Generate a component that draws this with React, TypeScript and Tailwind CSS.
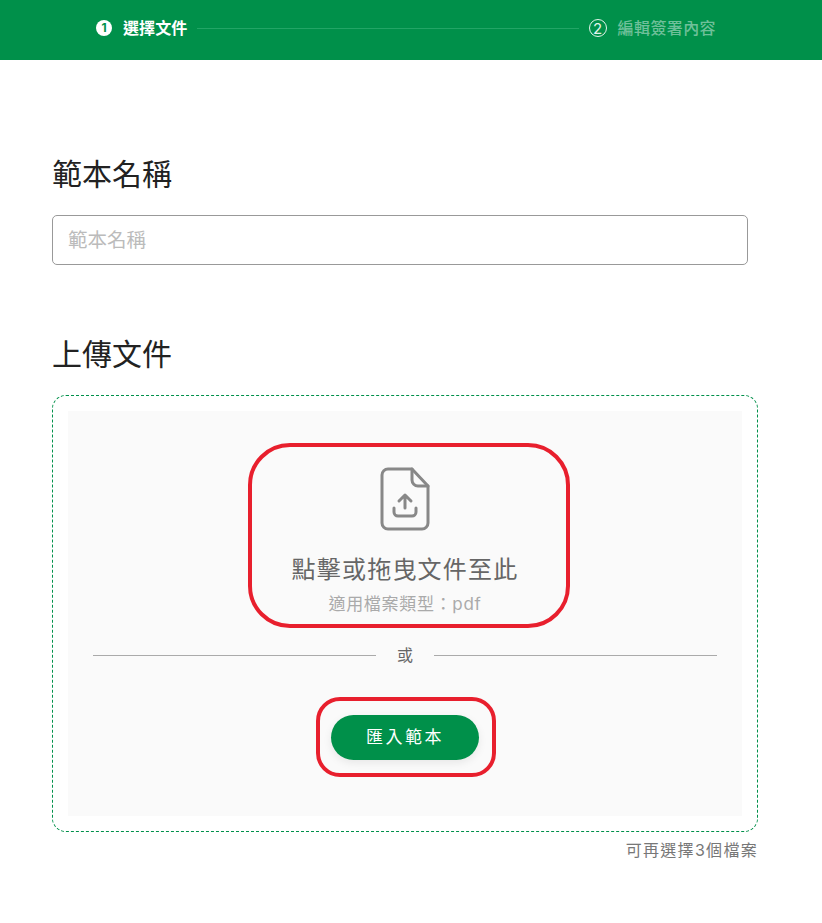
import React from "react";

const App = () => {
  return (
    <div className="flex flex-col w-full bg-white font-['Inter','Noto_Sans_CJK_TC',sans-serif]">
      <div className="bg-[#00904a] h-[60px] w-full flex items-center pl-[96px] pr-[106px] pb-[4px]">
        <div className="w-4 h-4 rounded-full bg-white text-[#00904a] text-[12px] font-bold flex items-center justify-center leading-none">
          1
        </div>
        <p className="ml-[11px] text-white font-bold text-base tracking-[0.1px]">選擇文件</p>
        <div className="flex-1 h-px bg-[#22a566] mx-[10px]"></div>
        <div className="w-[18px] h-[18px] rounded-full border border-[#e3f4eb] text-[#e3f4eb] text-[15px] flex items-center justify-center leading-none">
          2
        </div>
        <p className="ml-[11px] text-[#6fc09a] font-medium text-base tracking-[0.4px]">編輯簽署內容</p>
      </div>

      <div className="pl-[52px] pr-[64px] pt-[92px] flex flex-col">
        <p className="text-[30px] leading-[44px] text-[#222222]">範本名稱</p>
        <input
          placeholder="範本名稱"
          className="mt-[19px] w-[696px] h-[50px] border border-[#999999] rounded-[5px] px-[15px] text-[19.5px] placeholder:text-[#bbbbbb] outline-none"
        />

        <p className="mt-[67px] text-[30px] leading-[44px] text-[#222222]">上傳文件</p>

        <div className="mt-[19px] w-[706px] h-[437px] border border-dashed border-[#00904a] rounded-[14px] p-[15px]">
          <div className="bg-[#fafafa] h-full flex flex-col items-center pt-[32px]">
            <div className="ml-[7px] pr-[7px] w-[322px] h-[185px] border-[4px] border-[#e81f2d] rounded-[42px] flex flex-col items-center pt-[20px]">
              <svg width="50" height="64" viewBox="0 0 50 64" fill="none" stroke="#888888" strokeWidth="3" strokeLinecap="round" strokeLinejoin="round">
                <path d="M8 2h24l16 17v37a6 6 0 0 1-6 6H8a6 6 0 0 1-6-6V8a6 6 0 0 1 6-6z" />
                <path d="M32 2v11a6 6 0 0 0 6 6h10" />
                <path d="M25 41V28M19 34l6-6 6 6" />
                <path d="M14 41v4a4 4 0 0 0 4 4h14a4 4 0 0 0 4-4v-4" />
              </svg>
              <p className="mt-[23px] text-2xl leading-[32px] tracking-[1.2px] text-[#666666]">點擊或拖曳文件至此</p>
              <p className="mt-[6px] text-[17px] leading-[24px] tracking-[0.7px] text-[#aaaaaa]">適用檔案類型：pdf</p>
            </div>

            <div className="w-[624px] mt-[15px] flex items-center gap-[21px]">
              <div className="flex-1 h-px bg-[#aaaaaa]"></div>
              <p className="text-base leading-6 text-[#666666]">或</p>
              <div className="flex-1 h-px bg-[#aaaaaa]"></div>
            </div>

            <div className="mt-[30px] ml-[2px] pr-[2px] pt-[1px] w-[180px] h-[80px] border-[4px] border-[#e81f2d] rounded-[24px] flex items-center justify-center">
              <button className="w-[148px] h-[45px] pt-[1px] rounded-full bg-[#00904a] text-white text-[17px] tracking-[2.5px] shadow-[0_3px_8px_rgba(0,0,0,0.08)]">
                匯入範本
              </button>
            </div>
          </div>
        </div>

        <p className="w-[706px] mt-[6px] pb-[60px] text-right text-base leading-6 tracking-[1.3px] text-[#777777]">可再選擇3個檔案</p>
      </div>
    </div>
  );
};

export default App;
